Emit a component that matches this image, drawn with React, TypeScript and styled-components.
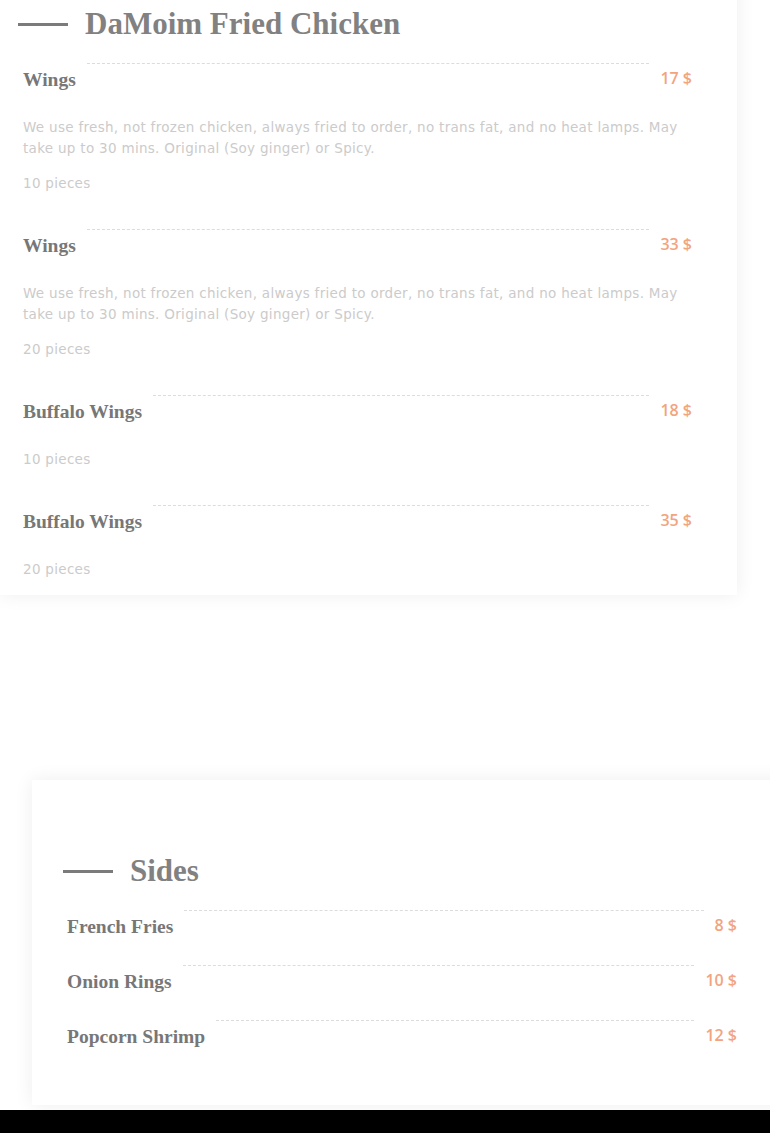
import React from "react";
import styled, { createGlobalStyle } from "styled-components";

const GlobalStyle = createGlobalStyle`
  html, body {
    margin: 0;
    padding: 0;
    background: #ffffff;
    overflow-x: hidden;
  }
`;

const Page = styled.div`
  width: 770px;
  overflow: hidden;
  background: #fff;
`;

const Card = styled.section<{ $left: number; $width: number; $top: number; $padLeft: number; $padRight: number; $padBottom: number }>`
  margin-left: ${(p) => p.$left}px;
  width: ${(p) => p.$width}px;
  box-sizing: border-box;
  margin-top: ${(p) => p.$top}px;
  padding: 0 ${(p) => p.$padRight}px ${(p) => p.$padBottom}px ${(p) => p.$padLeft}px;
  background: #fff;
  box-shadow: 0 0 18px rgba(0, 0, 0, 0.07);
`;

const TitleRow = styled.div<{ $padTop: number; $shift: number }>`
  display: flex;
  align-items: center;
  gap: 17px;
  padding-top: ${(p) => p.$padTop}px;
  margin-left: ${(p) => p.$shift}px;
  margin-bottom: 21px;
`;

const Dash = styled.span`
  width: 50px;
  height: 3px;
  background: #7b7b7b;
  flex: none;
`;

const Title = styled.h2`
  margin: 0;
  font-family: "Liberation Serif", "DejaVu Serif", serif;
  font-weight: 700;
  font-size: 31px;
  line-height: 36px;
  color: #818181;
`;

const Item = styled.div<{ $gapAfter: number }>`
  padding-bottom: ${(p) => p.$gapAfter}px;
`;

const Row = styled.div`
  display: flex;
  align-items: flex-start;
  gap: 11px;
`;

const Name = styled.span`
  margin-top: 5px;
  font-family: "Liberation Serif", "DejaVu Serif", serif;
  font-weight: 700;
  font-size: 19.5px;
  line-height: 24px;
  color: #777;
  white-space: nowrap;
`;

const Leader = styled.span`
  flex: 1;
  border-top: 1px dashed #dcdcdc;
`;

const Price = styled.span`
  margin-top: 4px;
  font-family: "Open Sans", "DejaVu Sans", sans-serif;
  font-weight: 600;
  font-size: 16px;
  line-height: 22px;
  color: #f2a47f;
  white-space: nowrap;
`;

const Details = styled.div`
  display: flex;
  flex-direction: column;
  gap: 14px;
  margin-top: 25px;
`;

const Note = styled.p`
  margin: 0;
  font-family: "DejaVu Sans", "Noto Sans", sans-serif;
  font-size: 13.5px;
  letter-spacing: 0.3px;
  line-height: 21px;
  color: #cbcbcb;
`;

const Footer = styled.div`
  margin-top: 5px;
  height: 40px;
  background: #000;
`;

type MenuItem = { name: string; price: string; desc?: string; pieces?: string };

const chicken: MenuItem[] = [
  {
    name: "Wings",
    price: "17 $",
    desc: "We use fresh, not frozen chicken, always fried to order, no trans fat, and no heat lamps. May take up to 30 mins. Original (Soy ginger) or Spicy.",
    pieces: "10 pieces",
  },
  {
    name: "Wings",
    price: "33 $",
    desc: "We use fresh, not frozen chicken, always fried to order, no trans fat, and no heat lamps. May take up to 30 mins. Original (Soy ginger) or Spicy.",
    pieces: "20 pieces",
  },
  { name: "Buffalo Wings", price: "18 $", pieces: "10 pieces" },
  { name: "Buffalo Wings", price: "35 $", pieces: "20 pieces" },
];

const sides: MenuItem[] = [
  { name: "French Fries", price: "8 $" },
  { name: "Onion Rings", price: "10 $" },
  { name: "Popcorn Shrimp", price: "12 $" },
];

function MenuRow({ item, gapAfter }: { item: MenuItem; gapAfter: number }) {
  return (
    <Item $gapAfter={gapAfter}>
      <Row>
        <Name>{item.name}</Name>
        <Leader />
        <Price>{item.price}</Price>
      </Row>
      {(item.desc || item.pieces) && (
        <Details>
          {item.desc && <Note>{item.desc}</Note>}
          {item.pieces && <Note>{item.pieces}</Note>}
        </Details>
      )}
    </Item>
  );
}

export default function App() {
  return (
    <Page>
      <GlobalStyle />
      <Card $left={0} $width={737} $top={-20} $padLeft={23} $padRight={45} $padBottom={0}>
        <TitleRow $padTop={26} $shift={-5}>
          <Dash />
          <Title>DaMoim Fried Chicken</Title>
        </TitleRow>
        {chicken.map((item, i) => (
          <MenuRow key={i} item={item} gapAfter={i === chicken.length - 1 ? 15 : 35} />
        ))}
      </Card>
      <Card $left={32} $width={770} $top={185} $padLeft={35} $padRight={65} $padBottom={56}>
        <TitleRow $padTop={73} $shift={-4}>
          <Dash />
          <Title>Sides</Title>
        </TitleRow>
        {sides.map((item, i) => (
          <MenuRow key={i} item={item} gapAfter={i === sides.length - 1 ? 0 : 26} />
        ))}
      </Card>
      <Footer />
    </Page>
  );
}
